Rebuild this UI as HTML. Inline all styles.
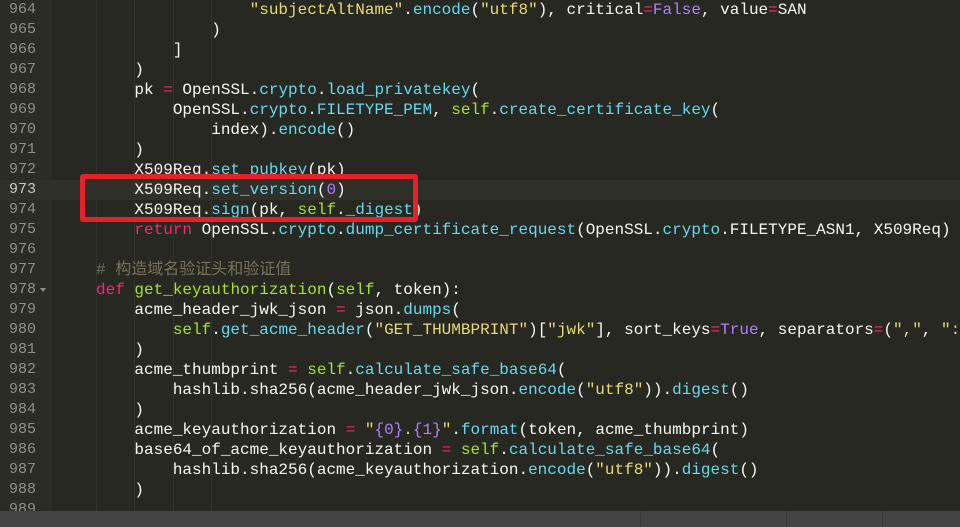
<!DOCTYPE html>
<html><head><meta charset="utf-8"><style>
html,body{margin:0;padding:0;width:960px;height:527px;overflow:hidden;background:#272822}
.g{position:absolute;left:0;top:0;width:52px;height:511px;background:#2b2c26}
.code{position:absolute;left:0;top:0;width:960px}
.l{position:relative;height:20px;line-height:20px;white-space:pre;font-family:"Liberation Mono","Noto Sans CJK SC",monospace;font-size:16px;color:#F8F8F2}
.l.act{background:#2f302a}
.n{position:absolute;left:0;width:36px;text-align:right;color:#8F908A;font-size:15px}
.t{position:absolute;left:57.6px;top:0}
.k{color:#F92672}.f{color:#66D9EF}.s{color:#E6DB74}.y{color:#A6E22E}.p{color:#AE81FF}.c{color:#75715E}
.guide{position:absolute;top:0;width:0;border-left:1px dotted #3c3d37;height:511px}
.box{position:absolute;left:80px;top:174px;width:328px;height:38px;border:5px solid #e8202a;border-radius:3px}
.sb{position:absolute;left:0;top:511px;width:960px;height:16px;background:#444444}
.dv{position:absolute;top:511px;width:1px;height:16px;background:#3a3a3a}
.fold{position:absolute;left:40px;top:8px;width:0;height:0;border-left:3px solid transparent;border-right:3px solid transparent;border-top:4px solid #8f908a}
</style></head><body>
<div class="g"></div>
<div class="guide" style="left:96px"></div><div class="guide" style="left:134px"></div><div class="guide" style="left:173px"></div><div class="guide" style="left:211px"></div>
<div class="code">
<div class="l"><span class="n">964</span><span class="t">                    <span class="s">"subjectAltName"</span>.<span class="f">encode</span>(<span class="s">"utf8"</span>), critical<span class="k">=</span><span class="p">False</span>, value<span class="k">=</span>SAN</span></div>
<div class="l"><span class="n">965</span><span class="t">                )</span></div>
<div class="l"><span class="n">966</span><span class="t">            ]</span></div>
<div class="l"><span class="n">967</span><span class="t">        )</span></div>
<div class="l"><span class="n">968</span><span class="t">        pk <span class="k">=</span> OpenSSL.<span class="f">crypto</span>.<span class="f">load_privatekey</span>(</span></div>
<div class="l"><span class="n">969</span><span class="t">            OpenSSL.<span class="f">crypto</span>.<span class="f">FILETYPE_PEM</span>, <span class="y">self</span>.<span class="f">create_certificate_key</span>(</span></div>
<div class="l"><span class="n">970</span><span class="t">                index).<span class="f">encode</span>()</span></div>
<div class="l"><span class="n">971</span><span class="t">        )</span></div>
<div class="l"><span class="n">972</span><span class="t">        X509Req.<span class="f">set_pubkey</span>(pk)</span></div>
<div class="l act"><span class="n" style="color:#c8c8c0">973</span><span class="t">        X509Req.<span class="f">set_version</span>(<span class="p">0</span>)</span></div>
<div class="l"><span class="n">974</span><span class="t">        X509Req.<span class="f">sign</span>(pk, <span class="y">self</span>.<span class="f">_digest</span>)</span></div>
<div class="l"><span class="n">975</span><span class="t">        <span class="k">return</span> OpenSSL.<span class="f">crypto</span>.<span class="f">dump_certificate_request</span>(OpenSSL.<span class="f">crypto</span>.FILETYPE_ASN1, X509Req)</span></div>
<div class="l"><span class="n">976</span><span class="t"></span></div>
<div class="l"><span class="n">977</span><span class="t">    <span class="c"># 构造域名验证头和验证值</span></span></div>
<div class="l"><span class="n">978</span><span class="fold"></span><span class="t">    <span class="k">def</span> <span class="y">get_keyauthorization</span>(<span class="y">self</span>, token):</span></div>
<div class="l"><span class="n">979</span><span class="t">        acme_header_jwk_json <span class="k">=</span> json.<span class="f">dumps</span>(</span></div>
<div class="l"><span class="n">980</span><span class="t">            <span class="y">self</span>.<span class="f">get_acme_header</span>(<span class="s">"GET_THUMBPRINT"</span>)[<span class="s">"jwk"</span>], sort_keys<span class="k">=</span><span class="p">True</span>, separators<span class="k">=</span>(<span class="s">","</span>, <span class="s">":"</span>))</span></div>
<div class="l"><span class="n">981</span><span class="t">        )</span></div>
<div class="l"><span class="n">982</span><span class="t">        acme_thumbprint <span class="k">=</span> <span class="y">self</span>.<span class="f">calculate_safe_base64</span>(</span></div>
<div class="l"><span class="n">983</span><span class="t">            hashlib.sha256(acme_header_jwk_json.<span class="f">encode</span>(<span class="s">"utf8"</span>)).<span class="f">digest</span>()</span></div>
<div class="l"><span class="n">984</span><span class="t">        )</span></div>
<div class="l"><span class="n">985</span><span class="t">        acme_keyauthorization <span class="k">=</span> <span class="s">"<span class="p">{0}</span>.<span class="p">{1}</span>"</span>.<span class="f">format</span>(token, acme_thumbprint)</span></div>
<div class="l"><span class="n">986</span><span class="t">        base64_of_acme_keyauthorization <span class="k">=</span> <span class="y">self</span>.<span class="f">calculate_safe_base64</span>(</span></div>
<div class="l"><span class="n">987</span><span class="t">            hashlib.sha256(acme_keyauthorization.<span class="f">encode</span>(<span class="s">"utf8"</span>)).<span class="f">digest</span>()</span></div>
<div class="l"><span class="n">988</span><span class="t">        )</span></div>
<div class="l"><span class="n">989</span><span class="t"></span></div>
</div>
<div class="box"></div>
<div class="sb"></div>
<div class="dv" style="left:640px"></div><div class="dv" style="left:786px"></div><div class="dv" style="left:882px"></div>
</body></html>
